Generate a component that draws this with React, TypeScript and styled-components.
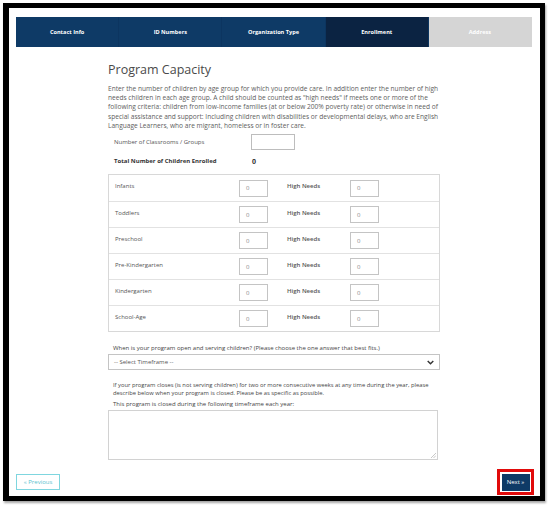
import React from 'react';
import styled, { createGlobalStyle } from 'styled-components';

const GlobalStyle = createGlobalStyle`
  html, body {
    margin: 0;
    padding: 0;
    background: #ffffff;
  }
  body {
    font-family: "Open Sans", "Liberation Sans", sans-serif;
    color: #555555;
  }
`;

type tabType = {
  label: string;
  state: 'done' | 'active' | 'todo';
};

const tabs: tabType[] = [
  { label: 'Contact Info', state: 'done' },
  { label: 'ID Numbers', state: 'done' },
  { label: 'Organization Type', state: 'done' },
  { label: 'Enrollment', state: 'active' },
  { label: 'Address', state: 'todo' },
];

const ageGroups = [
  'Infants',
  'Toddlers',
  'Preschool',
  'Pre-Kindergarten',
  'Kindergarten',
  'School-Age',
];

const App = () => {
  return (
    <>
      <GlobalStyle />
      <Page>
        <Frame>
          <TabBar>
            {tabs.map((tab) => (
              <Tab key={tab.label} state={tab.state}>
                {tab.label}
              </Tab>
            ))}
          </TabBar>

          <Main>
            <Title>Program Capacity</Title>
            <Intro>
              Enter the number of children by age group for which you provide
              care. In addition enter the number of high needs children in each
              age group. A child should be counted as "high needs" if meets one
              or more of the following criteria: children from low-income
              families (at or below 200% poverty rate) or otherwise in need of
              special assistance and support: Including children with
              disabilities or developmental delays, who are English Language
              Learners, who are migrant, homeless or in foster care.
            </Intro>

            <FieldRow>
              <FieldLabel>Number of Classrooms / Groups</FieldLabel>
              <WideInput />
            </FieldRow>
            <TotalRow>
              <FieldLabel bold>Total Number of Children Enrolled</FieldLabel>
              <TotalValue>0</TotalValue>
            </TotalRow>

            <AgeTable>
              {ageGroups.map((group) => (
                <AgeRow key={group}>
                  <AgeLabel>{group}</AgeLabel>
                  <SmallInput>0</SmallInput>
                  <NeedsLabel>High Needs</NeedsLabel>
                  <SmallInput>0</SmallInput>
                </AgeRow>
              ))}
            </AgeTable>

            <QuestionLabel>
              When is your program open and serving children? (Please choose
              the one answer that best fits.)
            </QuestionLabel>
            <SelectBox>
              <span>-- Select Timeframe --</span>
              <svg width="7" height="5" viewBox="0 0 10 7">
                <path
                  d="M1 1.2 L5 5.2 L9 1.2"
                  fill="none"
                  stroke="#333"
                  strokeWidth="2"
                />
              </svg>
            </SelectBox>

            <Note>
              If your program closes (is not serving children) for two or more
              consecutive weeks at any time during the year, please describe
              below when your program is closed. Please be as specific as
              possible.
            </Note>
            <QuestionLabel tight>
              This program is closed during the following timeframe each year:
            </QuestionLabel>
            <TextBox>
              <svg width="5" height="5" viewBox="0 0 5 5">
                <path d="M5 0 L0 5 M5 2.5 L2.5 5" stroke="#bbb" strokeWidth="0.8" />
              </svg>
            </TextBox>
          </Main>

          <Footer>
            <PrevButton>« Previous</PrevButton>
            <NextHighlight>
              <NextButton>Next »</NextButton>
            </NextHighlight>
          </Footer>
        </Frame>
      </Page>
    </>
  );
};

const Page = styled.div`
  width: 550px;
  height: 508px;
  padding: 3px 0 0 3px;
  box-sizing: border-box;
`;

const Frame = styled.div`
  width: 542px;
  height: 498px;
  box-sizing: border-box;
  border: 5px solid #000000;
  border-left-width: 6px;
  box-shadow: 1px 2px 2px rgba(0, 0, 0, 0.35);
  padding: 9px 8px 0 7px;
  display: flex;
  flex-direction: column;
`;

const TabBar = styled.div`
  display: grid;
  grid-template-columns: repeat(5, 1fr);
  height: 30px;
`;

const Tab = styled.div<{ state: 'done' | 'active' | 'todo' }>`
  display: flex;
  align-items: center;
  justify-content: center;
  font-size: 5.6px;
  font-weight: 700;
  color: #ffffff;
  background: ${(props) =>
    props.state === 'active'
      ? '#0b2342'
      : props.state === 'done'
      ? '#0e3a66'
      : '#d5d5d5'};
  border-right: 1px solid
    ${(props) => (props.state === 'todo' ? '#d5d5d5' : '#0c3560')};
`;

const Main = styled.div`
  margin-left: 92px;
  width: 332px;
  display: flex;
  flex-direction: column;
`;

const Title = styled.h1`
  margin: 14px 0 0;
  font-size: 12.5px;
  line-height: 18px;
  font-weight: 400;
  color: #4a4a4a;
`;

const Intro = styled.p`
  margin: 5px 0 0;
  font-size: 6.6px;
  line-height: 9.2px;
  color: #606060;
`;

const FieldRow = styled.div`
  display: flex;
  align-items: center;
  height: 16px;
  margin-top: 4px;
  padding-left: 6px;
`;

const TotalRow = styled(FieldRow)`
  margin-top: 3px;
`;

const FieldLabel = styled.span<{ bold?: boolean }>`
  width: 137px;
  font-size: 6px;
  font-weight: ${(props) => (props.bold ? 700 : 400)};
  color: ${(props) => (props.bold ? '#333333' : '#555555')};
`;

const WideInput = styled.div`
  width: 44px;
  height: 16px;
  box-sizing: border-box;
  border: 1px solid #bdbdbd;
`;

const TotalValue = styled.span`
  font-size: 7px;
  font-weight: 700;
  color: #333333;
  padding-left: 1px;
`;

const AgeTable = styled.div`
  margin-top: 5px;
  width: 330px;
  border: 1px solid #d8d8d8;
  display: flex;
  flex-direction: column;
`;

const AgeRow = styled.div`
  display: grid;
  grid-template-columns: 124px 29px 19px 63px 29px;
  align-items: center;
  height: 26px;
  padding-left: 6px;
  box-sizing: border-box;
  & + & {
    border-top: 1px solid #e2e2e2;
  }
`;

const AgeLabel = styled.span`
  font-size: 6px;
  color: #555555;
  margin-top: -4px;
`;

const NeedsLabel = styled.span`
  grid-column: 4;
  font-size: 6px;
  font-weight: 600;
  color: #555555;
  margin-top: -4px;
`;

const SmallInput = styled.div`
  width: 29px;
  height: 17px;
  box-sizing: border-box;
  border: 1px solid #c4c4c4;
  font-size: 6px;
  color: #888888;
  display: flex;
  align-items: center;
  padding-left: 6px;
`;

const QuestionLabel = styled.div<{ tight?: boolean }>`
  margin: ${(props) => (props.tight ? '4px' : '13px')} 0 0;
  padding-left: 5px;
  font-size: 6px;
  line-height: 7px;
  color: #444444;
`;

const SelectBox = styled.div`
  margin-top: 2px;
  width: 332px;
  height: 16px;
  box-sizing: border-box;
  border: 1px solid #c4c4c4;
  display: flex;
  align-items: center;
  justify-content: space-between;
  padding: 0 5px 0 5px;
  font-size: 6px;
  color: #555555;
`;

const Note = styled.p`
  margin: 12px 0 0;
  padding: 0 3px 0 5px;
  font-size: 5.8px;
  line-height: 7.5px;
  color: #444444;
`;

const TextBox = styled.div`
  margin-top: 2px;
  width: 330px;
  height: 50px;
  box-sizing: border-box;
  border: 1px solid #d2d2d2;
  display: flex;
  align-items: flex-end;
  justify-content: flex-end;
  padding: 1px;
`;

const Footer = styled.div`
  display: flex;
  justify-content: space-between;
  align-items: center;
  margin-top: 9px;
`;

const PrevButton = styled.div`
  height: 16px;
  width: 44px;
  box-sizing: border-box;
  border: 1px solid #7fd6df;
  display: flex;
  align-items: center;
  justify-content: center;
  font-size: 6px;
  color: #5cc3cf;
`;

const NextHighlight = styled.div`
  width: 37px;
  height: 26px;
  box-sizing: border-box;
  border: 3px solid #e10b0b;
  display: flex;
  align-items: center;
  justify-content: center;
  margin-right: -2px;
`;

const NextButton = styled.div`
  width: 28px;
  height: 17px;
  background: #0e3a66;
  color: #ffffff;
  font-size: 6px;
  display: flex;
  align-items: center;
  justify-content: center;
`;

export default App;
